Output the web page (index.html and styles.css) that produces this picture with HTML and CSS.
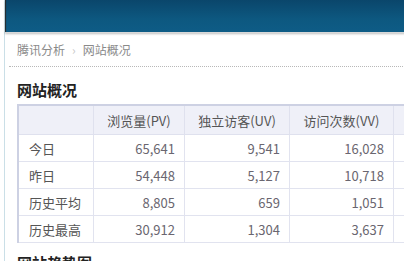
FILE: index.html
```html
<!DOCTYPE html>
<html>
<head>
<meta charset="utf-8">
<link rel="stylesheet" href="styles.css">
</head>
<body>
<div class="frame">
  <div class="topbar"></div>
  <div class="crumb">
    <span class="crumb-item">腾讯分析</span>
    <span class="crumb-sep">›</span>
    <span class="crumb-item">网站概况</span>
  </div>
  <div class="content">
    <h2 class="title">网站概况</h2>
    <table class="stats">
      <thead>
        <tr>
          <th class="c0"></th>
          <th class="c1">浏览量(PV)</th>
          <th class="c2">独立访客(UV)</th>
          <th class="c3">访问次数(VV)</th>
          <th class="c4">新</th>
        </tr>
      </thead>
      <tbody>
        <tr><td class="label">今日</td><td>65,641</td><td>9,541</td><td>16,028</td><td></td></tr>
        <tr><td class="label">昨日</td><td>54,448</td><td>5,127</td><td>10,718</td><td></td></tr>
        <tr><td class="label">历史平均</td><td>8,805</td><td>659</td><td>1,051</td><td></td></tr>
        <tr><td class="label">历史最高</td><td>30,912</td><td>1,304</td><td>3,637</td><td></td></tr>
      </tbody>
    </table>
    <h2 class="title title2">网站趋势图</h2>
  </div>
</div>
</body>
</html>
```
FILE: styles.css
```css
html, body {
  margin: 0;
  padding: 0;
  overflow: hidden;
  background: #fff;
}
body {
  font-family: "Noto Sans CJK SC", "Noto Sans", sans-serif;
  width: 404px;
  height: 261px;
}
.frame {
  margin-left: 4px;
  border-left: 1px solid #cadfe7;
  height: 261px;
  width: 600px;
}
.topbar {
  height: 32px;
  background: linear-gradient(#0a466b, #0d5880 60%, #0e5c86);
  box-shadow: inset 2px 0 1px -1px #2a2a2a, 0 1px 2px rgba(0,0,0,0.25);
  border-bottom: 1px solid #d8d8d8;
}
.crumb {
  margin-left: 4px;
  height: 33px;
  padding-left: 8px;
  display: flex;
  align-items: center;
  gap: 6px;
  border-bottom: 1px dotted #b8b8b8;
  font-size: 12px;
  color: #8a8a8a;
}
.crumb-sep {
  color: #c8c8c8;
  font-size: 12px;
  margin: 0 1px;
}
.content {
  padding-left: 12px;
}
.title {
  margin: 0;
  padding-top: 12px;
  height: 25px;
  line-height: 22px;
  font-size: 15px;
  font-weight: bold;
  color: #222;
}
.title2 {
  padding-top: 9px;
}
.stats {
  border-collapse: collapse;
  font-size: 13px;
  color: #666;
  table-layout: fixed;
  border-top: 2px solid #cdd1e3;
  border-left: 2px solid #cdd1e3;
}
.stats th {
  background: #eff0f8;
  font-weight: normal;
  color: #555;
  height: 28px;
  padding: 0;
  text-align: center;
  border: 1px solid #dfe1ee;
  border-top: none;
}
.stats th.c4 {
  text-align: left;
  padding-left: 12px;
}
.stats td {
  height: 26px;
  padding: 0 9px 0 10px;
  text-align: right;
  border: 1px solid #e1e3ef;
  color: #6a6670;
}
.stats td.label {
  text-align: left;
  color: #555;
}
.stats .c0 { width: 74px; }
.stats .c1 { width: 90px; }
.stats .c2 { width: 104px; }
.stats .c3 { width: 103px; }
.stats .c4 { width: 103px; }
```
